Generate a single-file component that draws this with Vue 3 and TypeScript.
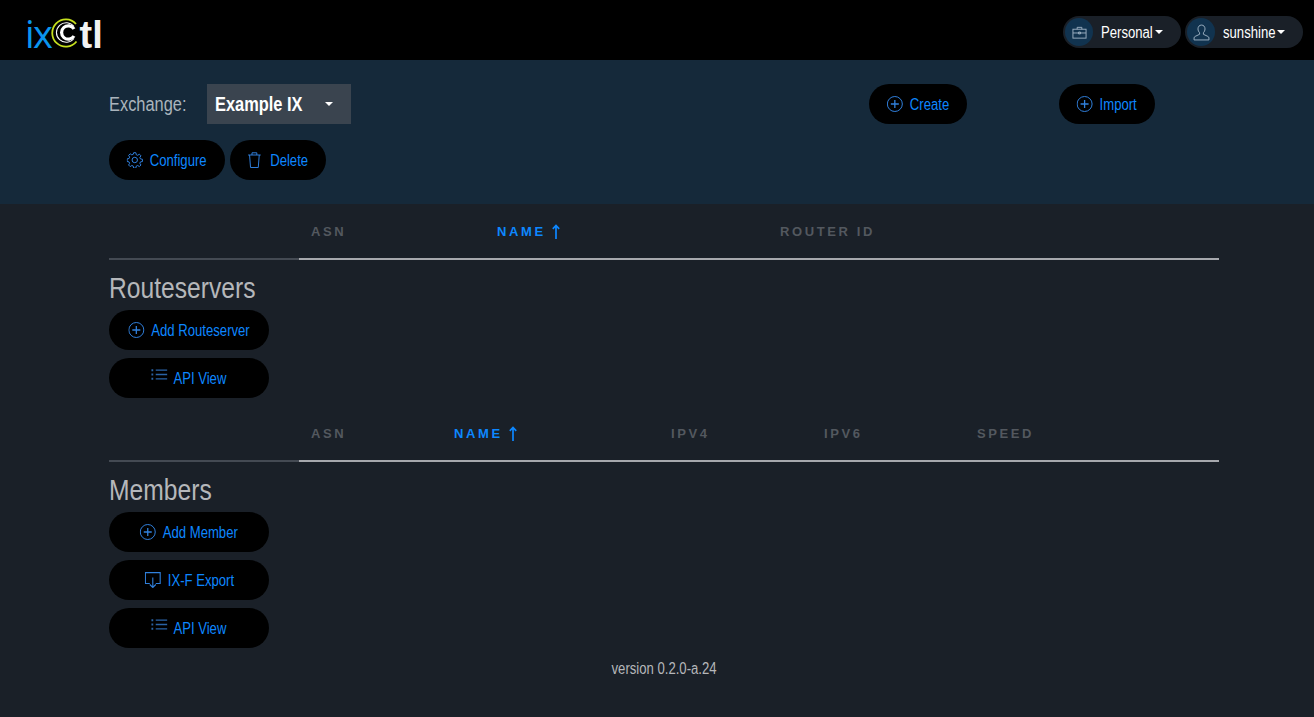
<template>
  <div class="page">
    <header class="topbar">
      <div class="logo">
        <span class="logo-ix">ix</span>
        <svg class="logo-c" viewBox="0 0 28 31" width="28" height="31" aria-hidden="true">
          <path d="M25 7A13.600 13.600 0 1 0 25.500 24.500" fill="none" stroke="#c6e01e" stroke-width="1.800" />
          <path d="M23 9.500A9.800 9.800 0 1 0 23 21.500" fill="none" stroke="#fff" stroke-width="1.100" />
          <path d="M23 12A6.700 6.700 0 1 0 23 19" fill="none" stroke="#fff" stroke-width="3.200" />
        </svg>
        <span class="logo-tl">tl</span>
      </div>
      <div class="user-menus">
        <div v-for="menu in menus" :key="menu.label" class="pill-menu">
          <span class="pill-icon">
            <svg v-if="menu.icon === 'case'" viewBox="0 0 16 16" width="15" height="15" fill="none" stroke="currentColor" stroke-width="1">
              <rect x="1" y="4.500" width="14" height="9.500" />
              <path d="M5.500 4.500V2.500h5v2M1 8.500h14M7 7.500h2v2H7z" />
            </svg>
            <svg v-else viewBox="0 0 16 16" width="17" height="17" fill="none" stroke="currentColor" stroke-width="0.900">
              <path d="M8 1c-2 0-3.300 1.500-3.300 3.600 0 1.500.7 2.800 1.500 3.600v1.500L2 11.700c-.6.300-1 .8-1 1.400V15h14v-1.900c0-.6-.4-1.100-1-1.400L9.800 9.700V8.200c.8-.8 1.500-2.100 1.500-3.600C11.300 2.500 10 1 8 1z" />
            </svg>
          </span>
          <span class="pill-label"><span class="narrow">{{ menu.label }}</span></span>
          <span class="caret"></span>
        </div>
      </div>
    </header>

    <section class="panel">
      <div class="panel-row">
        <div class="exchange">
          <span class="exchange-label"><span class="narrow">Exchange:</span></span>
          <div class="exchange-select">
            <span class="narrow">Example IX</span>
            <span class="caret"></span>
          </div>
        </div>
        <button class="btn create">
          <span class="btn-inner">
            <svg class="ico" viewBox="0 0 16 16" preserveAspectRatio="none" fill="none" stroke="currentColor"><circle cx="8" cy="8" r="7.500" /><path stroke-width="1.300" d="M8 4v8M4 8h8" /></svg>
            <span class="btn-text">Create</span>
          </span>
        </button>
        <button class="btn import">
          <span class="btn-inner">
            <svg class="ico" viewBox="0 0 16 16" preserveAspectRatio="none" fill="none" stroke="currentColor"><circle cx="8" cy="8" r="7.500" /><path stroke-width="1.300" d="M8 4v8M4 8h8" /></svg>
            <span class="btn-text">Import</span>
          </span>
        </button>
      </div>
      <div class="panel-actions">
        <button class="btn configure">
          <span class="btn-inner">
            <svg class="ico" viewBox="0 0 16 16" preserveAspectRatio="none" fill="none" stroke="currentColor" stroke-width="1">
              <circle cx="8" cy="8" r="2.700" />
              <path d="M6.900.7h2.200l.4 2 1.400.6 1.700-1.100 1.600 1.600-1.100 1.700.6 1.400 2 .4v2.200l-2 .4-.6 1.400 1.100 1.700-1.600 1.600-1.700-1.100-1.400.6-.4 2H6.900l-.4-2-1.400-.6-1.700 1.100-1.600-1.600 1.100-1.700-.6-1.400-2-.4V6.900l2-.4.6-1.400-1.100-1.700 1.600-1.600 1.700 1.100 1.400-.6z" stroke-linejoin="round" />
            </svg>
            <span class="btn-text">Configure</span>
          </span>
        </button>
        <button class="btn delete">
          <span class="btn-inner">
            <svg class="ico ico-trash" viewBox="0 0 14 16" preserveAspectRatio="none" fill="none" stroke="currentColor" stroke-width="1">
              <path d="M.5 3h13M2 3l1 12.500h8L12 3M4.500 3V.8h5V3" />
            </svg>
            <span class="btn-text">Delete</span>
          </span>
        </button>
      </div>
    </section>

    <main class="content">
      <section v-for="table in tables" :key="table.title" class="block">
        <div class="block-head">
          <div class="head-spacer"></div>
          <div class="columns" :class="table.layout">
            <span v-for="col in table.columns" :key="col" class="col-name" :class="{ active: col === 'NAME' }">
              {{ col }}
              <svg v-if="col === 'NAME'" class="sort-arrow" viewBox="0 0 10 15" width="10" height="15" fill="none" stroke="currentColor" stroke-width="1.700">
                <path d="M5 15V1.500M1.800 4.800 5 1.500l3.200 3.300" />
              </svg>
            </span>
          </div>
        </div>
        <div class="block-side">
          <h2><span class="narrow title-text">{{ table.title }}</span></h2>
          <button v-for="action in table.actions" :key="action.label" class="btn btn-wide">
            <span class="btn-inner">
              <svg v-if="action.icon === 'add'" class="ico" viewBox="0 0 16 16" preserveAspectRatio="none" fill="none" stroke="currentColor"><circle cx="8" cy="8" r="7.500" /><path stroke-width="1.300" d="M8 4v8M4 8h8" /></svg>
              <svg v-else-if="action.icon === 'list'" class="ico ico-list" viewBox="0 0 16 11" preserveAspectRatio="none" fill="none" stroke="currentColor" stroke-width="1.300">
                <path d="M4.500 1.200H16M4.500 5.500H16M4.500 9.800H16" />
                <path stroke-width="2" d="M0 1.200h2M0 5.500h2M0 9.800h2" />
              </svg>
              <svg v-else class="ico ico-export" viewBox="0 0 16 16" preserveAspectRatio="none" fill="none" stroke="currentColor" stroke-width="1.100">
                <path d="M5 11.500H.6V.6h14.800v10.900H11" />
                <path d="M8 5.500v10M5 12.500l3 3 3-3" />
              </svg>
              <span class="btn-text">{{ action.label }}</span>
            </span>
          </button>
        </div>
      </section>
      <footer class="version"><span class="narrow-center">version 0.2.0-a.24</span></footer>
    </main>
  </div>
</template>

<script setup lang="ts">
interface Action {
  label: string;
  icon: 'add' | 'list' | 'export';
}

const menus = [
  { label: 'Personal', icon: 'case' },
  { label: 'sunshine', icon: 'user' },
];

const tables: { title: string; layout: string; columns: string[]; actions: Action[] }[] = [
  {
    title: 'Routeservers',
    layout: 'cols-rs',
    columns: ['ASN', 'NAME', 'ROUTER ID'],
    actions: [
      { label: 'Add Routeserver', icon: 'add' },
      { label: 'API View', icon: 'list' },
    ],
  },
  {
    title: 'Members',
    layout: 'cols-members',
    columns: ['ASN', 'NAME', 'IPV4', 'IPV6', 'SPEED'],
    actions: [
      { label: 'Add Member', icon: 'add' },
      { label: 'IX-F Export', icon: 'export' },
      { label: 'API View', icon: 'list' },
    ],
  },
];
</script>

<style>
html,
body {
  margin: 0;
  background: #1a2028;
}
</style>

<style scoped>
.page {
  min-height: 717px;
  background: #1a2028;
  font-family: "Liberation Sans", sans-serif;
  font-size: 16px;
  color: #b5b7ba;
}

/* no narrow face installed, so the text is squeezed */
.narrow {
  display: inline-block;
  white-space: nowrap;
  transform: scaleX(0.82);
  transform-origin: left center;
}

.narrow-center {
  display: inline-block;
  white-space: nowrap;
  transform: scaleX(0.82);
}

.topbar {
  height: 60px;
  background: #000;
  display: flex;
  justify-content: space-between;
  padding: 0 10px 0 25px;
}

.logo {
  display: flex;
  align-items: baseline;
  height: 60px;
  box-sizing: border-box;
  padding-top: 13px;
  font-size: 38px;
  line-height: 40px;
}

.logo-ix {
  color: #0a95ee;
  font-family: "Open Sans", sans-serif;
  font-weight: 400;
  letter-spacing: -1.500px;
}

.logo-c {
  margin: 0 0 -1px 0;
}

.logo-tl {
  color: #f2f2f2;
  font-weight: 700;
  font-size: 38px;
}

.user-menus {
  display: flex;
  gap: 4px;
  padding-top: 16px;
}

.pill-menu {
  height: 32px;
  width: 118px;
  box-sizing: border-box;
  display: flex;
  align-items: center;
  background: #1a2028;
  border-radius: 16px;
  padding: 0 0 0 2px;
  color: #fff;
}

.pill-menu:first-child {
  margin-right: 0;
}

.pill-icon {
  width: 28px;
  height: 28px;
  border-radius: 50%;
  background: #11334f;
  color: #9db1c2;
  display: flex;
  align-items: center;
  justify-content: center;
  margin-right: 8px;
}

.pill-label {
  width: 54px;
  padding-top: 1px;
}

.caret {
  display: inline-block;
  width: 0;
  height: 0;
  border-left: 4.500px solid transparent;
  border-right: 4.500px solid transparent;
  border-top: 4.500px solid #fff;
}

.user-menus {
  margin-right: 1px;
}

.panel {
  height: 144px;
  background: #15293a;
  box-sizing: border-box;
  padding: 24px 95px 0 109px;
}

.panel-row {
  display: flex;
  align-items: center;
  height: 40px;
}

.exchange {
  width: 760px;
  display: flex;
  align-items: center;
}

.exchange-label {
  width: 98px;
  font-size: 20px;
  color: #aab4bc;
}

.exchange-select {
  width: 144px;
  height: 40px;
  background: #3a444f;
  box-sizing: border-box;
  padding: 0 18px 0 8px;
  display: flex;
  align-items: center;
  justify-content: space-between;
  font-size: 20px;
  font-weight: 700;
  color: #fff;
}

.btn {
  height: 40px;
  border: 0;
  border-radius: 20px;
  background: #000;
  color: #0d87ff;
  font: inherit;
  display: flex;
  align-items: center;
  justify-content: center;
  padding: 0;
}

.btn-inner {
  display: flex;
  align-items: center;
  white-space: nowrap;
  transform: scaleX(0.82);
}

.btn-text {
  padding-top: 2px;
}

/* width and gap are divided by the squeeze so the icon stays round */
.ico {
  width: 19.500px;
  height: 16px;
  color: #3080dc;
  margin-right: 8.500px;
  flex: none;
}

.ico-trash {
  width: 16.500px;
  margin-right: 11px;
}

.ico-list {
  height: 11px;
  margin-top: -7px;
  margin-right: 7.500px;
  color: #2a63a6;
}

.ico-export {
  margin-top: -1px;
}

.create {
  width: 98px;
  margin-right: 92px;
}

.import {
  width: 96px;
}

.configure {
  width: 116px;
}

.delete {
  width: 96px;
}

.panel-actions {
  display: flex;
  gap: 5px;
  margin-top: 16px;
}

.content {
  padding: 0 95px 0 109px;
}

.block-head {
  height: 56px;
  display: flex;
}

.head-spacer {
  width: 190px;
  border-bottom: 2px solid #444a53;
  box-sizing: border-box;
}

.columns {
  flex: 1;
  display: grid;
  align-items: center;
  height: 54px;
  padding-left: 12px;
  border-bottom: 2px solid #a6a8ad;
}

.cols-rs {
  grid-template-columns: 186px 283px 1fr;
}

.cols-members {
  grid-template-columns: 143px 217px 153px 153px 1fr;
}

.col-name {
  display: flex;
  align-items: center;
  gap: 5px;
  font-size: 13px;
  font-weight: 700;
  letter-spacing: 2.600px;
  color: #53585f;
}

.col-name.active {
  color: #0d87ff;
}

.block-side {
  width: 160px;
  display: flex;
  flex-direction: column;
  gap: 8px;
  padding-bottom: 8px;
}

.block-side h2 {
  margin: 10px 0 -4px 0;
  width: 190px;
  font-size: 29px;
  line-height: 36px;
  font-weight: 400;
  color: #b5b7ba;
}

.title-text {
  transform: scaleX(0.85);
}

.btn-wide {
  width: 160px;
}

.version {
  text-align: center;
  margin-top: -4px;
  line-height: 34px;
  color: #b5b7ba;
}
</style>
